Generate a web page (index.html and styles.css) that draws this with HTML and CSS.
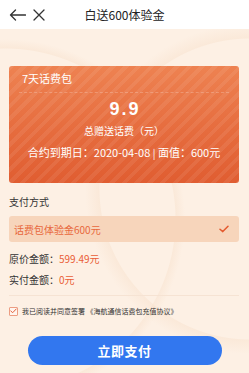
FILE: index.html
```html
<!DOCTYPE html>
<html lang="zh-CN">
<head>
<meta charset="utf-8">
<title>白送600体验金</title>
<link rel="stylesheet" href="styles.css">
</head>
<body>
<div class="page">
  <header class="header">
    <div class="nav-icons">
      <svg class="icon-back" width="17" height="12" viewBox="0 0 17 12"><path d="M16.5 6H1.5M6.5 1L1.5 6L6.5 11" fill="none" stroke="#333" stroke-width="1.3" stroke-linecap="round" stroke-linejoin="round"/></svg>
      <svg class="icon-close" width="12" height="12" viewBox="0 0 12 12"><path d="M1 1L11 11M11 1L1 11" fill="none" stroke="#333" stroke-width="1.3" stroke-linecap="round"/></svg>
    </div>
    <div class="title">白送600体验金</div>
    <div class="nav-spacer"></div>
  </header>
  <main class="main">
    <section class="card">
      <div class="card-name">7天话费包</div>
      <div class="card-divider"></div>
      <div class="card-amount">9.9</div>
      <div class="card-sub">总赠送话费（元）</div>
      <div class="card-info">合约到期日：2020-04-08 <span class="sep">|</span> 面值：600元</div>
    </section>
    <div class="section-label">支付方式</div>
    <div class="pay-option">
      <span>话费包体验金600元</span>
      <svg class="check" width="10" height="8" viewBox="0 0 10 8"><path d="M1 4.2L3.8 6.6L9 1.2" fill="none" stroke="#e45a2f" stroke-width="1.5" stroke-linecap="round" stroke-linejoin="round"/></svg>
    </div>
    <div class="price-row first"><span class="price-label">原价金额：</span><span class="price-value">599.49元</span></div>
    <div class="price-row"><span class="price-label">实付金额：</span><span class="price-value">0元</span></div>
    <div class="rule"></div>
    <div class="agree">
      <span class="agree-box"><svg width="7" height="6" viewBox="0 0 7 6"><path d="M0.8 3L2.7 4.7L6.2 1" fill="none" stroke="#e4603a" stroke-width="1" stroke-linecap="round" stroke-linejoin="round"/></svg></span>
      <span class="agree-text">我已阅读并同意签署 《海航通信话费包充值协议》</span>
    </div>
    <div class="btn-wrap"><button class="pay-btn">立即支付</button></div>
  </main>
</div>
</body>
</html>
```
FILE: styles.css
```css
* { box-sizing: border-box; }
html, body { margin: 0; padding: 0; }
body {
  font-family: "Noto Sans CJK SC", "Noto Sans", sans-serif;
  background: #fdf0e4;
  width: 249px;
  height: 373px;
  overflow: hidden;
}
.page { width: 249px; height: 373px; display: flex; flex-direction: column; }
.header {
  height: 29px;
  background: #fff;
  display: grid;
  grid-template-columns: 60px 1fr 60px;
  align-items: center;
  flex: none;
}
.nav-icons { display: flex; align-items: center; padding-left: 9px; gap: 7px; }
.icon-back, .icon-close { display: block; }
.title { text-align: center; font-size: 12px; line-height: 16px; color: #222; }
.main {
  flex: 1;
  padding: 37px 10px 0 9px;
  background:
    radial-gradient(circle at 5px 190px, transparent 170px, rgba(248,226,206,0.5) 171px, transparent 180px),
    radial-gradient(circle at 250px 160px, transparent 150px, rgba(248,226,206,0.5) 151px, transparent 165px),
    #fdf0e4;
}
.card {
  height: 117px;
  border-radius: 3px;
  padding: 5px 10px 0 10px;
  color: #fff;
  background:
    repeating-linear-gradient(135deg, rgba(255,255,255,0.07) 0 4px, rgba(255,255,255,0) 4px 9px),
    linear-gradient(180deg, #ee8251 0%, #e66c3e 55%, #e05d31 100%);
  text-align: center;
}
.card-name { text-align: left; padding-left: 3px; font-size: 11px; line-height: 15px; }
.card-divider { margin-top: 6px; height: 0; border-top: 1px dashed rgba(255,255,255,0.22); }
.card-amount {
  margin-top: 6px;
  font-family: "Liberation Sans", Arial, sans-serif;
  font-weight: bold;
  font-size: 18px;
  line-height: 20px;
  letter-spacing: 2px;
  padding-left: 2px;
}
.card-sub { margin-top: 5px; font-size: 10px; line-height: 14px; }
.card-info { margin-top: 7px; font-size: 11px; line-height: 14px; white-space: nowrap; }
.card-info .sep { font-size: 10px; }
.section-label { margin-top: 12px; font-size: 10px; line-height: 14px; color: #333; }
.pay-option {
  margin-top: 7px;
  height: 26px;
  border-radius: 3px;
  background: #f7d5bb;
  display: flex;
  align-items: center;
  justify-content: space-between;
  padding: 0 10px 0 5px;
  font-size: 10px;
  color: #e8683d;
}
.check { display: block; }
.price-row { margin-top: 7px; font-size: 10px; line-height: 14px; display: flex; }
.price-row.first { margin-top: 10px; }
.price-label { color: #333; width: 50px; }
.price-value { color: #ea5e36; }
.rule { margin-top: 8px; height: 1px; background: #f6e3d3; }
.agree { margin-top: 10px; display: flex; align-items: center; height: 10px; }
.agree-box {
  width: 9px; height: 9px;
  border: 1px solid #ec9d82;
  border-radius: 1px;
  background: #fff5ee;
  display: flex; align-items: center; justify-content: center;
  flex: none;
}
.agree-box svg { display: block; }
.agree-text { margin-left: 4px; font-size: 7px; line-height: 10px; color: #333; white-space: nowrap; }
.btn-wrap { margin-top: 20px; display: flex; justify-content: center; padding-left: 1px; }
.pay-btn {
  width: 194px;
  height: 29px;
  border: none;
  border-radius: 15px;
  background: #3277ef;
  color: #fff;
  font-family: "Noto Sans CJK SC", sans-serif;
  font-weight: bold;
  font-size: 13px;
  line-height: 29px;
  padding: 0;
  letter-spacing: 0.5px;
}
```
